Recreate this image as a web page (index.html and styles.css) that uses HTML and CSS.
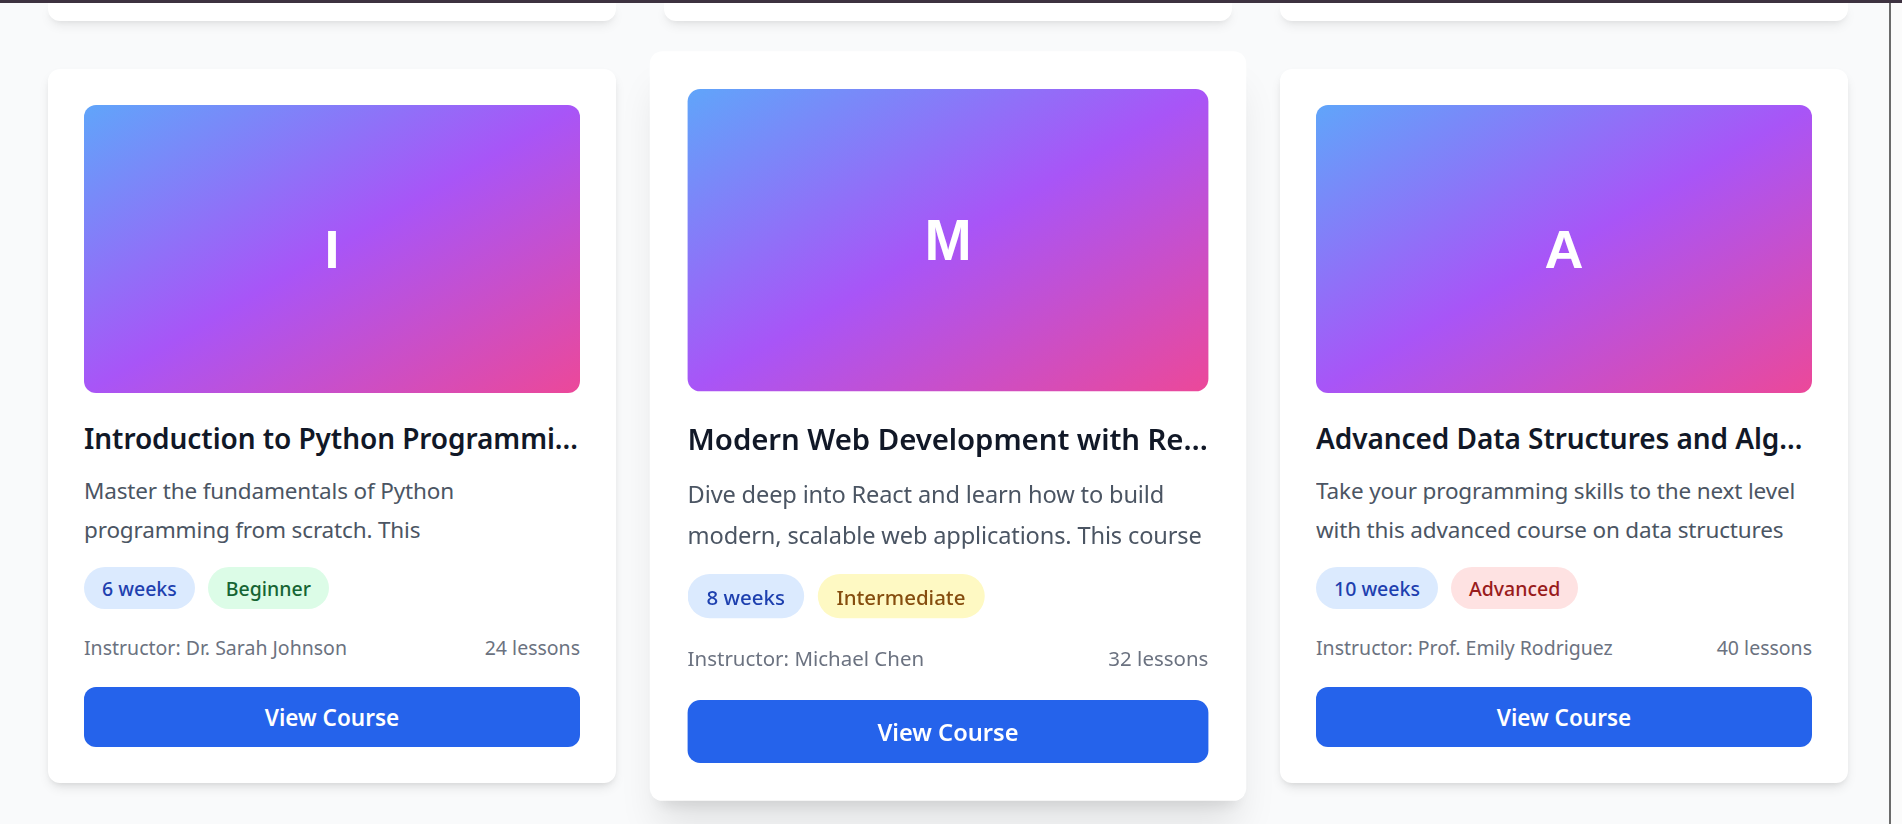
FILE: index.html
```html
<!DOCTYPE html>
<html lang="en">
<head>
<meta charset="utf-8">
<title>Courses</title>
<link rel="stylesheet" href="styles.css">
</head>
<body>
<div class="topbar"></div>
<div class="viewport">
  <main class="page">
    <div class="course-grid">
      <div class="stub"></div>
      <div class="stub"></div>
      <div class="stub"></div>

      <article class="card">
        <div class="thumb">I</div>
        <h3 class="title">Introduction to Python Programming: From Zero to Hero</h3>
        <p class="desc">Master the fundamentals of Python programming from scratch. This comprehensive course covers variables, data types, control flow, functions and more.</p>
        <div class="tags">
          <span class="pill pill-blue">6 weeks</span>
          <span class="pill pill-green">Beginner</span>
        </div>
        <div class="meta">
          <span>Instructor: Dr. Sarah Johnson</span>
          <span>24 lessons</span>
        </div>
        <button class="btn">View Course</button>
      </article>

      <article class="card featured">
        <div class="thumb">M</div>
        <h3 class="title">Modern Web Development with React and Next.js</h3>
        <p class="desc">Dive deep into React and learn how to build modern, scalable web applications. This course covers hooks, state management, routing and deployment.</p>
        <div class="tags">
          <span class="pill pill-blue">8 weeks</span>
          <span class="pill pill-yellow">Intermediate</span>
        </div>
        <div class="meta">
          <span>Instructor: Michael Chen</span>
          <span>32 lessons</span>
        </div>
        <button class="btn">View Course</button>
      </article>

      <article class="card">
        <div class="thumb">A</div>
        <h3 class="title">Advanced Data Structures and Algorithms</h3>
        <p class="desc">Take your programming skills to the next level with this advanced course on data structures and algorithms used in technical interviews.</p>
        <div class="tags">
          <span class="pill pill-blue">10 weeks</span>
          <span class="pill pill-red">Advanced</span>
        </div>
        <div class="meta">
          <span>Instructor: Prof. Emily Rodriguez</span>
          <span>40 lessons</span>
        </div>
        <button class="btn">View Course</button>
      </article>
    </div>
  </main>
  <div class="scrollbar"></div>
</div>
</body>
</html>
```

FILE: styles.css
```css
* {
  box-sizing: border-box;
}

html,
body {
  margin: 0;
  padding: 0;
  height: 100%;
  overflow: hidden;
}

body {
  background: #f9fafb;
  font-family: "Noto Sans", "Segoe UI", sans-serif;
  display: flex;
  flex-direction: column;
}

.topbar {
  height: 3px;
  background: #3d3240;
  flex: none;
}

.viewport {
  flex: 1;
  display: flex;
  min-height: 0;
}

.page {
  flex: 1;
  min-width: 0;
}

.scrollbar {
  width: 13px;
  flex: none;
  background: #fbfbfb;
  border-left: 2px solid #6b6b6b;
}

.course-grid {
  display: grid;
  grid-template-columns: repeat(3, 568px);
  column-gap: 48px;
  row-gap: 48px;
  padding-left: 48px;
  align-items: start;
}

.stub {
  height: 18px;
  background: #ffffff;
  border-radius: 0 0 12px 12px;
  box-shadow: 0 6px 12px -2px rgba(0, 0, 0, 0.08), 0 3px 6px -3px rgba(0, 0, 0, 0.08);
}

.card {
  background: #ffffff;
  border-radius: 12px;
  padding: 36px;
  box-shadow: 0 6px 12px -2px rgba(0, 0, 0, 0.1), 0 3px 6px -3px rgba(0, 0, 0, 0.1);
}

.card.featured {
  position: relative;
  z-index: 1;
  transform: scale(1.05);
  box-shadow: 0 30px 37px -8px rgba(0, 0, 0, 0.1), 0 12px 15px -9px rgba(0, 0, 0, 0.1);
}

.thumb {
  height: 288px;
  border-radius: 12px;
  background: linear-gradient(to bottom right, #60a5fa, #a855f7, #ec4899);
  display: flex;
  align-items: center;
  justify-content: center;
  color: #ffffff;
  font-family: "Liberation Sans", Arial, sans-serif;
  font-size: 54px;
  line-height: 60px;
  font-weight: 700;
}

.title {
  margin: 24px 0 0;
  font-size: 28px;
  line-height: 42px;
  font-weight: 600;
  letter-spacing: -0.07px;
  color: #111827;
  white-space: nowrap;
  overflow: hidden;
  text-overflow: ellipsis;
}

.desc {
  margin: 12px 0 0;
  font-size: 22.5px;
  line-height: 39px;
  letter-spacing: -0.15px;
  height: 72px;
  overflow: hidden;
  color: #4b5563;
}

.tags {
  margin-top: 24px;
  display: flex;
  gap: 13px;
}

.pill {
  display: inline-flex;
  align-items: center;
  height: 42px;
  padding: 0 18px;
  border-radius: 999px;
  font-size: 19.5px;
  font-weight: 500;
}

.pill-blue {
  background: #dbeafe;
  color: #1e40af;
}

.pill-green {
  background: #dcfce7;
  color: #166534;
}

.pill-yellow {
  background: #fef9c3;
  color: #854d0e;
}

.pill-red {
  background: #fee2e2;
  color: #991b1b;
}

.meta {
  margin-top: 24px;
  display: flex;
  justify-content: space-between;
  font-size: 19.5px;
  line-height: 30px;
  color: #6b7280;
}

.btn {
  margin-top: 24px;
  display: block;
  width: 100%;
  height: 60px;
  border: none;
  border-radius: 12px;
  background: #2563eb;
  color: #ffffff;
  font-family: inherit;
  font-size: 22.5px;
  font-weight: 600;
  cursor: pointer;
}
```
